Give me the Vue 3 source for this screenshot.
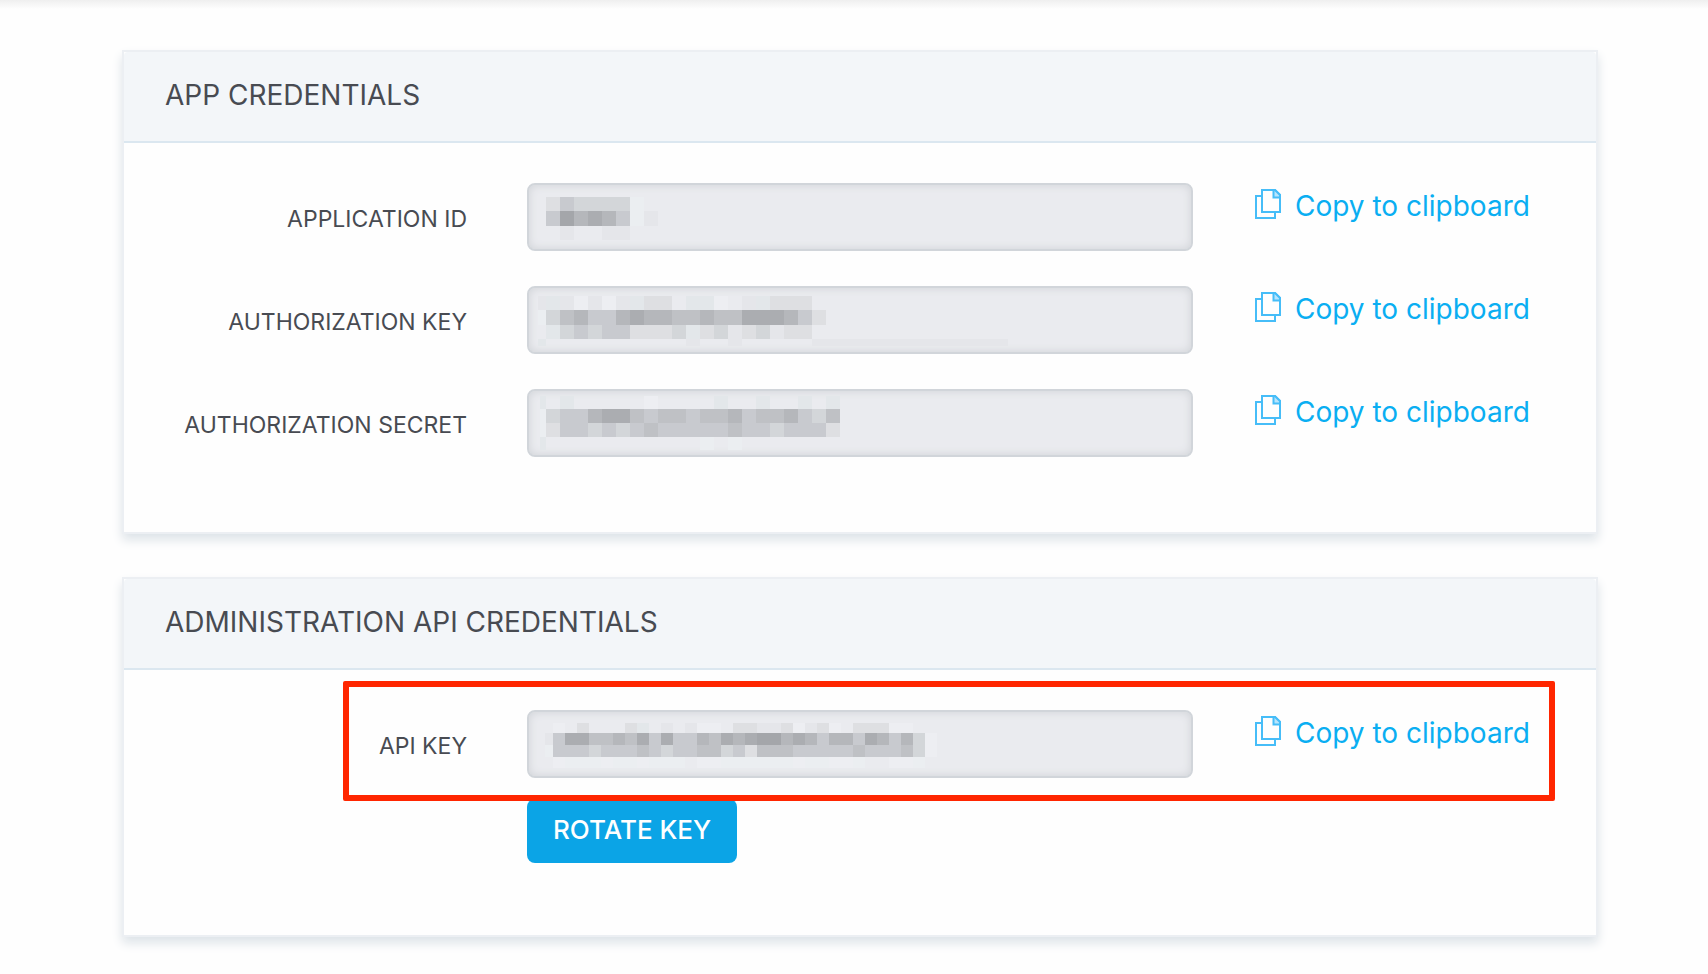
<script setup>
// Shades of the pixelated cover, keyed by the characters used in the cell maps
const shades = {
  a: '#edeef2',
  b: '#ebeef1',
  w: '#e3e7ea',
  1: '#e5e6ea',
  2: '#dedfe2',
  3: '#d3d6d9',
  4: '#c8cacf',
  5: '#bfc1c5',
  6: '#b5b7bb',
  7: '#abadb1',
  8: '#a4a6aa',
}

function mosaic({ x, size, edge, rows }) {
  const cells = []
  for (const { y, h, first, map } of rows) {
    if (shades[first]) cells.push({ x: x - edge, y, w: edge, h, fill: shades[first] })
    ;[...map].forEach((key, i) => {
      if (shades[key]) cells.push({ x: x + i * size, y, w: size, h, fill: shades[key] })
    })
  }
  return cells
}

const appFields = [
  {
    id: 'application-id',
    label: 'APPLICATION ID',
    cells: mosaic({
      x: 19, size: 14, edge: 8,
      rows: [
        { y: 14, h: 14, first: '.', map: '243333b.' },
        { y: 28, h: 15, first: '.', map: '486764b1' },
        { y: 43, h: 14, first: '.', map: '.1..11..' },
      ],
    }),
  },
  {
    id: 'authorization-key',
    label: 'AUTHORIZATION KEY',
    cells: mosaic({
      x: 19, size: 14, edge: 8,
      rows: [
        { y: 10, h: 14, first: '1', map: 'w1a1a1w22.wwa.1w222' },
        { y: 24, h: 15, first: 'b', map: '35644676655655777642' },
        { y: 39, h: 14, first: '.', map: 'w343442223w23123122' },
        { y: 53, h: 7, first: 'w', map: '..........1..1.....11111111111111' },
      ],
    }),
  },
  {
    id: 'authorization-secret',
    label: 'AUTHORIZATION SECRET',
    cells: mosaic({
      x: 19, size: 14, edge: 6,
      rows: [
        { y: 7, h: 13, first: 'w', map: '.w.....a....w..w..w.w' },
        { y: 20, h: 14, first: 'b', map: '344677545545564556435' },
        { y: 34, h: 14, first: 'b', map: '244343454444454434442' },
        { y: 48, h: 13, first: 'w', map: '...........b.b.......' },
      ],
    }),
  },
]

const apiFields = [
  {
    id: 'api-key',
    label: 'API KEY',
    marked: true,
    cells: mosaic({
      x: 26, size: 12, edge: 8,
      rows: [
        { y: 13, h: 10, first: '.', map: 'a.2...2w.1.1aa.22112a12a.222aa.' },
        { y: 23, h: 12, first: '1', map: '4775565747446576788676466476463a' },
        { y: 35, h: 12, first: 'b', map: '4443444543445534255544444544453a' },
        { y: 47, h: 11, first: '.', map: 'abbbabbabbb.aabbbbbbabbaab..aab' },
      ],
    }),
  },
]

const cards = [
  { title: 'APP CREDENTIALS', fields: appFields },
  { title: 'ADMINISTRATION API CREDENTIALS', fields: apiFields, action: 'ROTATE KEY' },
]
</script>

<template>
  <main class="page">
    <section v-for="card in cards" :key="card.title" class="card">
      <header class="card-header">
        <h2>{{ card.title }}</h2>
      </header>
      <div class="card-body" :class="{ 'has-action': card.action }">
        <div class="fields">
          <div v-for="field in card.fields" :key="field.id" class="row">
            <label :for="field.id">{{ field.label }}</label>
            <div class="control">
              <input :id="field.id" type="text" readonly />
              <svg class="cover" width="520" height="68" shape-rendering="crispEdges" aria-hidden="true">
                <rect
                  v-for="(c, i) in field.cells"
                  :key="i"
                  :x="c.x"
                  :y="c.y"
                  :width="c.w"
                  :height="c.h"
                  :fill="c.fill"
                />
              </svg>
            </div>
            <a class="copy" href="#">
              <svg width="26" height="30" viewBox="0 0 26 30" fill="none" aria-hidden="true">
                <path d="M7 7H1V29H20V24" />
                <path d="M7 1H20L25 6V23H7Z" />
                <path class="fold" d="M18.500 1V8.500H25V6L20 1Z" />
              </svg>
              <span>Copy to clipboard</span>
            </a>
            <div v-if="field.marked" class="marker"></div>
          </div>
        </div>
        <div v-if="card.action" class="row actions">
          <button type="button">{{ card.action }}</button>
        </div>
      </div>
    </section>
  </main>
</template>

<style>
body {
  margin: 0;
  background: #fefefe;
}
</style>

<style scoped>
.page {
  display: flex;
  flex-direction: column;
  gap: 43px;
  padding: 50px 110px 37px 122px;
  background: linear-gradient(#efefef, #fefefe) top / 100% 9px no-repeat;
  font-family: Inter, "Liberation Sans", sans-serif;
  color: #484b52;
}

.card {
  border: 2px solid #eceff3;
  background: #fefefe;
  box-shadow: 0 6px 10px #dde3e8;
}

.card-header {
  padding: 26px 41px 29px;
  border-bottom: 2px solid #dbe7f0;
  border-radius: 4px 4px 0 0;
  background: #f3f6f9;
}

h2 {
  margin: 0;
  font-size: 28px;
  line-height: 34px;
  font-weight: 400;
}

.card-body {
  padding: 40px 0 75px;
}

.card-body.has-action {
  padding-bottom: 72px;
}

.fields {
  display: grid;
  gap: 35px;
}

.row {
  position: relative;
  display: grid;
  grid-template-columns: 403fr 666fr 403fr;
  align-items: center;
}

label {
  padding: 4px 60px 0 0;
  text-align: right;
  font-size: 23px;
  line-height: 28px;
}

.control {
  position: relative;
}

input {
  display: block;
  box-sizing: border-box;
  width: 100%;
  height: 68px;
  padding: 0 18px;
  border: 2px solid #d1d5da;
  border-radius: 8px;
  outline: none;
  background: #eaebef;
  box-shadow: inset 0 0 8px #cfd2d6;
  font: inherit;
  font-size: 23px;
  color: inherit;
}

.cover {
  position: absolute;
  top: 0;
  left: 0;
  pointer-events: none;
}

.copy {
  display: flex;
  align-items: flex-start;
  align-self: start;
  justify-self: start;
  gap: 14px;
  margin: 6px 0 0 62px;
  font-size: 28px;
  line-height: 34px;
  white-space: nowrap;
  color: #0aaef2;
  text-decoration: none;
}

.copy path {
  stroke: #46bdf8;
  stroke-width: 2;
}

.copy .fold {
  fill: #b9e5fc;
}

.marker {
  position: absolute;
  top: -29px;
  right: 41px;
  bottom: -23px;
  left: 219px;
  z-index: 1;
  border: 6px solid #ff2600;
  border-radius: 2px;
  pointer-events: none;
}

.actions {
  margin-top: 21px;
}

button {
  grid-column: 2;
  justify-self: start;
  height: 64px;
  padding: 0 26px 2px;
  border: 0;
  border-radius: 8px;
  background: #0ba4e6;
  font: 500 26px/32px Inter, "Liberation Sans", sans-serif;
  color: #fff;
}
</style>
